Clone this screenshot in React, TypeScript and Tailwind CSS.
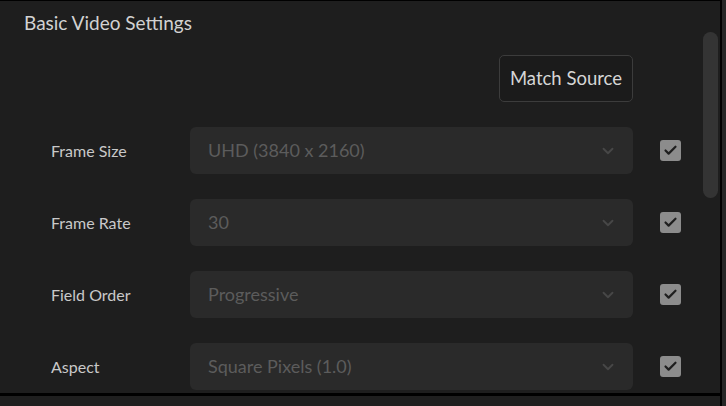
import { ChevronDown, Check } from 'lucide-react'

const rows = [
  { label: 'Frame Size', value: 'UHD (3840 x 2160)' },
  { label: 'Frame Rate', value: '30' },
  { label: 'Field Order', value: 'Progressive' },
  { label: 'Aspect', value: 'Square Pixels (1.0)' },
]

function SettingRow({ label, value }: { label: string; value: string }) {
  return (
    <div className="flex h-[47px] items-center">
      <span className="w-[190px] shrink-0 pl-[51px] text-[16px] text-[#c9c9c9]">{label}</span>
      <div className="flex h-[47px] w-[443px] shrink-0 items-center justify-between rounded-[6px] bg-[#2a2a2a] pl-[18px] pr-[16px]">
        <span className="text-[18px] text-[#5c5c5c]">{value}</span>
        <ChevronDown size={18} strokeWidth={2.5} className="text-[#474747]" />
      </div>
      <div className="ml-[27px] flex h-[21px] w-[21px] shrink-0 items-center justify-center rounded-[3px] bg-[#8c8c8c]">
        <Check size={15} strokeWidth={3.5} className="text-[#1e1e1e]" />
      </div>
    </div>
  )
}

export default function App() {
  return (
    <div
      className="flex h-[406px] w-[726px] overflow-hidden bg-[#1e1e1e]"
      style={{ fontFamily: 'Lato, "Open Sans", sans-serif' }}
    >
      <div className="flex w-[720px] flex-col">
        <div className="flex h-[393px] flex-col border-t border-black">
          <div className="flex flex-1 overflow-hidden">
            <div className="flex w-[700px] flex-col">
              <h2 className="pl-[24px] pt-[10px] text-[19px] leading-[24px] text-[#d2d2d2]">
                Basic Video Settings
              </h2>
              <div className="mt-[20px] flex justify-end pr-[67px]">
                <button className="h-[47px] rounded-[5px] border border-[#3c3c3c] bg-[#1b1b1b] px-[10px] text-[18.5px] text-[#d6d6d6]">
                  Match Source
                </button>
              </div>
              <div className="mt-[25px] flex flex-col gap-[25px]">
                {rows.map((r) => (
                  <SettingRow key={r.label} label={r.label} value={r.value} />
                ))}
              </div>
            </div>
            <div className="ml-[3px] pt-[31px]">
              <div className="h-[166px] w-[15px] rounded-full bg-[#343434]" />
            </div>
          </div>
        </div>
        <div className="h-[3px] bg-black" />
        <div className="flex-1 bg-[#1f1f1f]" />
      </div>
      <div className="w-[2px] bg-black" />
      <div className="flex-1 bg-[#262626]" />
    </div>
  )
}
